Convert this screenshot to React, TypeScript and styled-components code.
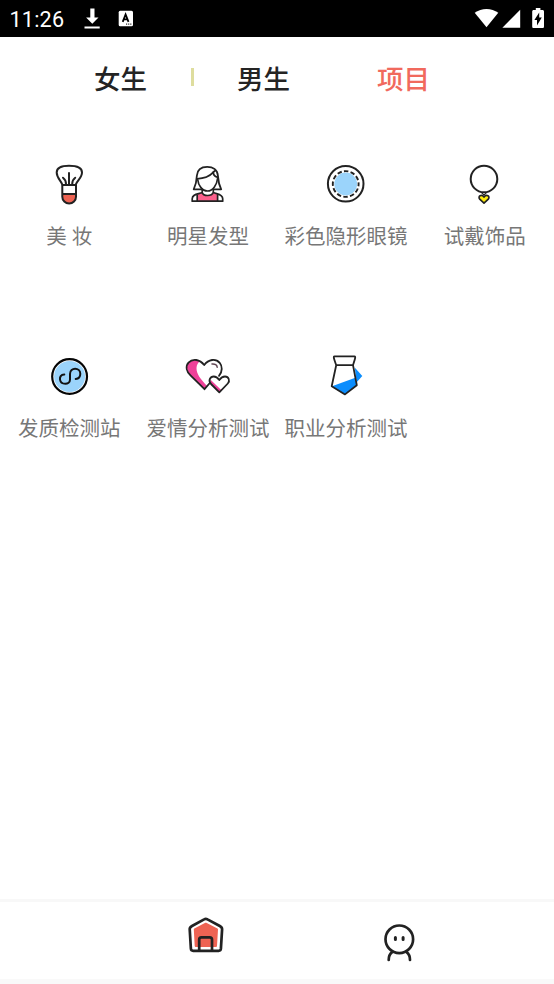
import React from "react";
import styled, { createGlobalStyle } from "styled-components";

const GlobalStyle = createGlobalStyle`
  * { box-sizing: border-box; }
  body { margin: 0; background: #fff; font-family: "Noto Sans CJK SC", sans-serif; }
`;

const Screen = styled.div`
  display: flex;
  flex-direction: column;
  width: 554px;
  height: 984px;
  background: #fff;
  overflow: hidden;
`;

const StatusBar = styled.header`
  display: flex;
  justify-content: space-between;
  flex: none;
  height: 37px;
  background: #000;
  color: #fff;
`;

const StatusGroup = styled.div`
  display: flex;
`;

const Clock = styled.time`
  width: 75px;
  padding-left: 9.5px;
  font: 400 21.6px/39px Roboto, sans-serif;
  letter-spacing: 0.2px;
`;

const Glyph = styled.svg`
  display: block;
  flex: none;
`;

const Tabs = styled.nav`
  display: grid;
  grid-template-columns: 94px 97px 46px 140px 177px;
  flex: none;
  height: 118px;
`;

const Tab = styled.span<{ $column: number; $active?: boolean }>`
  grid-column: ${(p) => p.$column};
  grid-row: 1;
  padding-top: 21px;
  font-size: 26.5px;
  line-height: 40px;
  font-weight: 500;
  white-space: nowrap;
  color: ${(p) => (p.$active ? "#f1695d" : "#242424")};
`;

const Divider = styled.i`
  grid-column: 3;
  grid-row: 1;
  width: 3px;
  height: 18px;
  margin-top: 31px;
  background: #dedd9e;
`;

const ProjectGrid = styled.main`
  display: grid;
  grid-template-columns: repeat(4, 138px);
  grid-auto-rows: 191px;
  padding-left: 1px;
  flex: 1;
  align-content: start;
`;

const Label = styled.span`
  margin-top: 5px;
  font-size: 20.5px;
  line-height: 30px;
  word-spacing: 0.6px;
  color: #777;
  white-space: nowrap;
`;

const Project = styled.div`
  display: flex;
  flex-direction: column;
  align-items: center;

  &:nth-child(4n + 1) ${Label} {
    margin-right: 1.5px;
  }
  &:nth-child(4n) ${Label} {
    margin-left: 1.5px;
  }
  &:nth-child(n + 5) ${Label} {
    margin-top: 6px;
  }
`;

const BottomBar = styled.footer`
  display: flex;
  flex: none;
  height: 85px;
  padding-left: 176px;
  gap: 134px;
  border-top: 3px solid #f8f8f8;
  border-bottom: 5px solid #f9f9f9;
`;

const ink = "#222";

const Drawing = ({ children, height = 60 }: { children: React.ReactNode; height?: number }) => (
  <Glyph
    width={60}
    height={height}
    viewBox={`0 0 60 ${height}`}
    fill="none"
    stroke={ink}
    strokeWidth={2}
    strokeLinecap="round"
    strokeLinejoin="round"
  >
    {children}
  </Glyph>
);

const Brush = () => (
  <Drawing>
    <path d="M22.3 29.5C20.8 25.5 16.7 22.8 16.7 17.5C16.7 12 22 10.8 29 10.8S42 12 42 17.5C42 22.8 37.2 25.5 35.8 29.5" />
    <path d="M29 18v11M23 22.7c2 1.5 3 3.7 3 6.3M35.2 22.7c-2 1.5-3 3.7-3 6.3" />
    <path d="M22.3 39.2H36V42a6.85 6.3 0 0 1-13.7 0Z" fill="#ee6353" stroke="none" />
    <path d="M22.3 30H36V41.7a6.85 6.7 0 0 1-13.7 0ZM22.3 39H36" />
  </Drawing>
);

const Woman = () => (
  <Drawing>
    <path d="M19.2 39.2L24.2 38c1 4 9.7 4 11 0l4.4 1.2V46H19.2Z" fill="#fb608c" stroke="none" />
    <path d="M24.2 34.3H15.7C18.5 28.5 18.7 25 18.9 20.5C19.3 14.7 23.5 11.8 29.2 11.8S39.4 14.7 39.9 20.5C40.2 25 40.3 28.5 43.2 34.3H35.3" strokeWidth={1.8} />
    <path d="M19.2 23.8C28 23.6 32.2 20.7 35.5 17.2C34.8 20.7 38.7 22.2 39.7 22.2M19.7 24.5C20.3 30.2 24 36 29.5 36S39 29.5 39.7 23M34.7 17.5l2.7-2" strokeWidth={1.7} />
    <path d="M24.2 34.3V37.5C20.5 39.2 14.2 38.8 14.2 43.8V46.2H44.7V43.8C44.7 38.8 38.7 39.2 35.3 37.5V34.3M24.2 37.5c1 4 9.7 4 11 0M19.2 40.2V46M39.6 40.2V46" strokeWidth={1.7} />
  </Drawing>
);

const Lens = () => (
  <Drawing>
    <circle cx="29.7" cy="29" r="11.4" fill="#9bd4fb" stroke="none" />
    <circle cx="29.7" cy="28.8" r="17.8" />
    <circle cx="29.7" cy="29" r="12.9" strokeWidth={1.9} strokeDasharray="4.5 2.255" strokeDashoffset="2.2" strokeLinecap="butt" />
  </Drawing>
);

const Necklace = () => (
  <Drawing>
    <circle cx="30" cy="24" r="13.3" />
    <path d="M28 38.2l2 2 2-2" strokeWidth={1.2} />
    <path d="M30 48.2L25.7 44.2C23.5 41.3 27.5 38.6 30 42C32.5 38.6 36.5 41.3 34.3 44.2Z" fill="#ffed0d" strokeWidth={1.7} />
  </Drawing>
);

const HairCheck = () => (
  <Drawing>
    <circle cx="29.6" cy="30.5" r="15.5" fill="#9bd4fb" stroke="none" />
    <circle cx="29.6" cy="30.5" r="17.4" stroke="#050505" strokeWidth={2.2} />
    <path d="M24.3 28.5C20.8 28.7 19.7 31.1 20 33.5C20.8 39.3 30 39.2 30 33.5V28C30 21 40.3 21.4 40.3 27.7C40.3 31 38.3 32.7 35.7 33" stroke="#111" />
  </Drawing>
);

const Hearts = () => (
  <Drawing>
    <path d="M19 14C14.5 13 9 16 9 21.5C9 25.5 11.5 28 15 31.3L26.5 43L29 40C22 32.5 18.5 28 18.5 22C18.5 18.5 20.5 16.5 22 15Z" fill="#ef4199" stroke="none" />
    <path d="M31.8 37L26.5 43.2L12.5 29.3C8.5 25.5 7.2 20.5 10.5 16.7C14.8 12 21.8 13.4 26.2 19C30.5 13.4 37.5 12 41.7 16.8C44.4 20.1 44.7 25.4 41 29.8" strokeWidth={1.8} />
    <path d="M34 18c3-.3 5 1.1 5.2 3.3" stroke="#604653" strokeWidth={1.5} />
    <path d="M41.3 46.3L33 38C29.8 34.5 32.3 30.5 35.7 30.5C38.3 30.5 40 32.2 41.3 34C42.7 32 44.4 30.5 47 30.5C50.8 30.5 52.2 35 49.8 37.5Z" fill="#fff" stroke="none" />
    <path d="M32.3 33.5L43.5 44.3L41.3 46.3L33 38Z" fill="#ef4199" stroke="none" />
    <path d="M41.3 46.3L33 38C29.8 34.5 32.3 30.5 35.7 30.5C38.3 30.5 40 32.2 41.3 34C42.7 32 44.4 30.5 47 30.5C50.8 30.5 52.2 35 49.8 37.5Z" strokeWidth={1.8} />
  </Drawing>
);

const Tie = () => (
  <Drawing>
    <path d="M38.7 21.5L46.3 30L40.7 36.2Z" fill="#0b8dfd" stroke="none" />
    <path d="M16 40.3L39.3 31.8L40.7 39.2L29 48.3Z" fill="#0b8dfd" stroke="none" />
    <path d="M18.5 10.3H38.5C40.2 10.3 38.4 14.5 37 19.2H20.2C18.6 14.5 16.8 10.3 18.5 10.3ZM20.2 19.2L15.7 40.3L29 48.4L40.8 39.2L37 19.2" strokeWidth={1.8} />
  </Drawing>
);

const House = () => (
  <Drawing height={77}>
    <path d="M29.8 21.7L41 27.5L40 44H19.7L18.8 27.5Z" fill="#ee6353" stroke="#ee6353" />
    <path d="M14.9 46.8L13.7 27.2C13.6 25.4 14.5 24.8 16 24L28.1 17.4Q29.8 16.4 31.5 17.4L43.8 24C45.6 25 46.2 25.6 46.1 27.4L44.9 46.7Q44.7 48.8 42.7 48.8H17.2Q15 48.8 14.9 46.8Z" strokeWidth={2.7} />
    <path d="M23.2 48V37.5Q23.2 35.3 25.4 35.3H33.7Q36 35.3 36 37.5V48" strokeWidth={2.7} />
  </Drawing>
);

const Profile = () => (
  <Drawing height={77}>
    <circle cx="29.3" cy="37.3" r="13.8" strokeWidth={2.7} />
    <path d="M25.4 35.4v2.2M33.1 35.4v2.2" strokeWidth={3} />
    <path d="M18.7 58C18.7 54.5 19.8 51.7 22.2 50.1M40 58C40 54.5 38.9 51.7 36.5 50.1" strokeWidth={2.7} />
  </Drawing>
);

const projects = [
  { name: "美 妆", Icon: Brush },
  { name: "明星发型", Icon: Woman },
  { name: "彩色隐形眼镜", Icon: Lens },
  { name: "试戴饰品", Icon: Necklace },
  { name: "发质检测站", Icon: HairCheck },
  { name: "爱情分析测试", Icon: Hearts },
  { name: "职业分析测试", Icon: Tie },
];

export default function App() {
  return (
    <Screen>
      <GlobalStyle />
      <StatusBar>
        <StatusGroup>
          <Clock>11:26</Clock>
          <Glyph width="75" height="37" viewBox="75 0 75 37" fill="#fff">
            <path d="M90.3 8.5h4.2v9h4l-6.2 6.3-6.2-6.3h4.2ZM84.5 26.5h15.2v2H84.5Z" />
            <rect x="118.7" y="10.7" width="14.3" height="15.6" rx="1.5" />
            <path d="M122.7 21.8L125.6 14.4L128.5 21.8M123.8 19.3H127.4" fill="none" stroke="#000" strokeWidth="1.8" />
            <path d="M126 24.1h1.2M128.1 24.1h1.2M130.2 24.1h1.2" stroke="#000" />
          </Glyph>
        </StatusGroup>
        <Glyph width="94" height="37" viewBox="460 0 94 37" fill="#fff">
          <path d="M474.7 12.8C481.5 7.6 491.5 7.6 498.3 12.8L486.5 27.3Z" />
          <path d="M520.2 9.7V27.7H502.4Z" />
          <path d="M535.8 8h4.6v2.1h2c1 0 1.6.6 1.6 1.5v14.8c0 1-.6 1.5-1.5 1.5h-8.8c-1 0-1.5-.5-1.5-1.5V11.6c0-.9.5-1.5 1.5-1.5h2.1Z" />
          <path d="M539.2 12.5V17.5H541.8L537 25.4V20H534.4Z" fill="#000" />
        </Glyph>
      </StatusBar>
      <Tabs>
        <Tab $column={2}>女生</Tab>
        <Divider />
        <Tab $column={4}>男生</Tab>
        <Tab $column={5} $active>项目</Tab>
      </Tabs>
      <ProjectGrid>
        {projects.map(({ name, Icon }) => (
          <Project key={name}>
            <Icon />
            <Label>{name}</Label>
          </Project>
        ))}
      </ProjectGrid>
      <BottomBar>
        <House />
        <Profile />
      </BottomBar>
    </Screen>
  );
}
